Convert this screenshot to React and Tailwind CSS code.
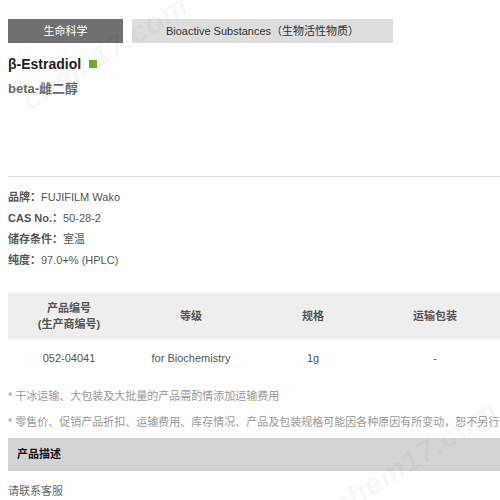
const info = [
  ["品牌：", "FUJIFILM Wako"],
  ["CAS No.：", "50-28-2"],
  ["储存条件：", "室温"],
  ["纯度：", "97.0+% (HPLC)"],
];

const cols = "grid grid-cols-[122px_122px_122px_122px]";

function Watermark({ className }) {
  return (
    <div
      className={
        "pointer-events-none absolute select-none whitespace-nowrap text-[30px] font-bold italic tracking-wide text-black/[0.04] -rotate-[32deg] " +
        className
      }
    >
      chem17.com
    </div>
  );
}

export default function App() {
  return (
    <div className="relative h-[500px] w-[500px] overflow-hidden bg-white pl-2 font-['Liberation_Sans','Noto_Sans_CJK_SC',sans-serif] text-[11px] text-[#555]">
      {/* category tabs */}
      <div className="mt-[19px] flex h-6 gap-[9px]">
        <div className="flex w-[115px] items-center justify-center bg-[#707070] text-white">生命科学</div>
        <div className="flex w-[261px] items-center justify-center bg-[#dcdddc] text-[#333]">
          Bioactive Substances（生物活性物质）
        </div>
      </div>

      {/* title */}
      <div className="mt-3 flex h-[18px] items-center gap-2">
        <h1 className="text-[14px] font-bold leading-[18px] text-[#222]">β-Estradiol</h1>
        <span className="h-2 w-2 bg-[#6cae2b]" />
      </div>
      <div className="mt-[7px] h-[18px] text-[13px] font-bold leading-[18px] text-[#6a6a6a]">beta-雌二醇</div>

      <div className="mt-[78px] border-t border-[#dddddd]" />

      {/* properties */}
      <div className="mt-[10px]">
        {info.map(([k, v]) => (
          <div key={k} className="h-[21px] leading-[21px]">
            <span className="font-bold">{k}</span>
            {v}
          </div>
        ))}
      </div>

      {/* table */}
      <div className="mt-[22px]">
        <div className={cols + " h-[46px] items-center bg-[#eeeeee] text-center font-bold leading-[16px]"}>
          <div>
            产品编号
            <br />
            (生产商编号)
          </div>
          <div>等级</div>
          <div>规格</div>
          <div>运输包装</div>
        </div>
        <div className={cols + " h-[38px] items-center text-center"}>
          <div>052-04041</div>
          <div>for Biochemistry</div>
          <div>1g</div>
          <div>-</div>
        </div>
      </div>

      <div className="mt-[10px] h-[18px] whitespace-nowrap leading-[18px] text-[#999]">
        * 干冰运输、大包装及大批量的产品需酌情添加运输费用
      </div>
      <div className="mt-2 h-[18px] overflow-hidden whitespace-nowrap leading-[18px] text-[#999]">
        * 零售价、促销产品折扣、运输费用、库存情况、产品及包装规格可能因各种原因有所变动，恕不另行通知
      </div>

      <div className="mt-[7px] flex h-[33px] items-center bg-[#d3d3d3] pl-[9px] text-[11px] font-bold text-[#111]">
        产品描述
      </div>
      <div className="mt-[11px] h-[18px] text-[11px] leading-[18px] text-[#666]">请联系客服</div>

      <Watermark className="left-[10px] top-[30px]" />
      <Watermark className="left-[320px] top-[435px]" />
    </div>
  );
}
